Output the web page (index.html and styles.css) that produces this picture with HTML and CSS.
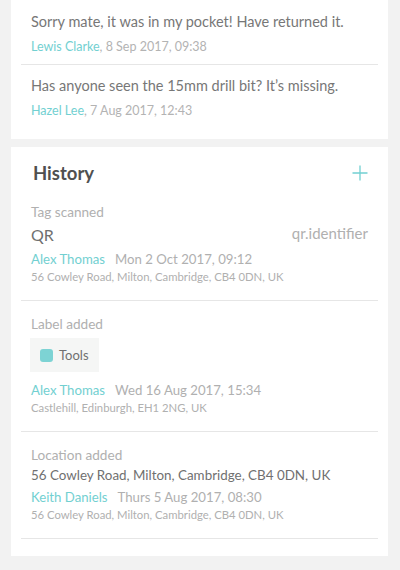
FILE: index.html
```html
<!DOCTYPE html>
<html lang="en">
<head>
    <meta charset="UTF-8">
    <meta name="viewport" content="width=device-width, initial-scale=1.0">
    <title>Item history</title>
    <link rel="stylesheet" href="styles.css">
</head>
<body>
    <section class="card comments">
        <ul class="list">
            <li class="comment">
                <p class="comment-text">Sorry mate, it was in my pocket! Have returned it.</p>
                <p class="comment-meta"><span class="user">Lewis Clarke</span>, 8 Sep 2017, 09:38</p>
            </li>
            <li class="comment">
                <p class="comment-text">Has anyone seen the 15mm drill bit? It’s missing.</p>
                <p class="comment-meta"><span class="user">Hazel Lee</span>, 7 Aug 2017, 12:43</p>
            </li>
        </ul>
    </section>

    <section class="card history">
        <header class="card-header">
            <h2 class="card-title">History</h2>
            <button class="add-btn" type="button" aria-label="Add">
                <svg width="16" height="16" viewBox="0 0 16 16">
                    <path d="M8 0.5V15.5M0.5 8H15.5" stroke="#72d0d2" stroke-width="1.3" fill="none"/>
                </svg>
            </button>
        </header>
        <ul class="list">
            <li class="event">
                <p class="event-type">Tag scanned</p>
                <div class="event-row">
                    <span class="event-value">QR</span>
                    <span class="event-id">qr.identifier</span>
                </div>
                <p class="event-meta"><span class="user">Alex Thomas</span><span class="date">Mon 2 Oct 2017, 09:12</span></p>
                <p class="event-place">56 Cowley Road, Milton, Cambridge, CB4 0DN, UK</p>
            </li>
            <li class="event">
                <p class="event-type">Label added</p>
                <span class="chip"><span class="chip-dot"></span>Tools</span>
                <p class="event-meta"><span class="user">Alex Thomas</span><span class="date">Wed 16 Aug 2017, 15:34</span></p>
                <p class="event-place">Castlehill, Edinburgh, EH1 2NG, UK</p>
            </li>
            <li class="event">
                <p class="event-type">Location added</p>
                <p class="event-address">56 Cowley Road, Milton, Cambridge, CB4 0DN, UK</p>
                <p class="event-meta"><span class="user">Keith Daniels</span><span class="date">Thurs 5 Aug 2017, 08:30</span></p>
                <p class="event-place">56 Cowley Road, Milton, Cambridge, CB4 0DN, UK</p>
            </li>
        </ul>
    </section>
</body>
</html>
```

FILE: styles.css
```css
body {
    margin: 0;
    background-color: #f2f2f2;
    font-family: 'Lato', 'Noto Sans', sans-serif;
    color: #777777;
    height: 570px;
    overflow: hidden;
}

p {
    margin: 0;
}

.card {
    background-color: #ffffff;
    margin: 0 12px 0 11px;
}

.list {
    list-style: none;
    margin: 0 10px;
    padding: 0;
}

.user {
    color: #72d0d1;
}

/* comments */

.comments {
    padding: 1px 0 11px;
}

.comment {
    padding: 11px 10px 8px;
    border-bottom: 1px solid #e6e6e6;
}

.comment:last-child {
    border-bottom: none;
}

.comment-text {
    font-size: 14.5px;
    line-height: 20px;
}

.comment-meta {
    margin-top: 6px;
    font-size: 12.5px;
    line-height: 18px;
    color: #b3b3b3;
}

/* history */

.history {
    margin-top: 8px;
    padding: 13px 0 17px;
}

.card-header {
    display: flex;
    justify-content: space-between;
    align-items: center;
    padding: 1px 20px 0 22px;
    margin-bottom: 4px;
}

.card-title {
    margin: 0;
    font-size: 18.5px;
    line-height: 24px;
    font-weight: 700;
    color: #505050;
}

.add-btn {
    border: none;
    background: none;
    padding: 0;
    width: 16px;
    height: 16px;
    cursor: pointer;
}

.add-btn svg {
    display: block;
}

.event {
    padding: 14px 10px 15px;
    border-bottom: 1px solid #e6e6e6;
}

.event-type {
    font-size: 13.6px;
    line-height: 18px;
    color: #b0b0b0;
}

.event-row {
    display: flex;
    justify-content: space-between;
    align-items: flex-start;
    margin-top: 3px;
}

.event-value {
    font-size: 16px;
    line-height: 22px;
    color: #707070;
}

.event-id {
    font-size: 15px;
    line-height: 18px;
    color: #b0b0b0;
}

.event-address {
    margin-top: 2px;
    font-size: 13.4px;
    line-height: 18px;
    color: #707070;
}

.event-meta {
    margin-top: 4px;
    font-size: 13.2px;
    line-height: 18px;
    color: #b0b0b0;
}

.event-meta .date {
    margin-left: 10px;
}

.event-place {
    margin-top: 1px;
    font-size: 11.3px;
    line-height: 16px;
    color: #b0b0b0;
}

.chip {
    display: flex;
    width: fit-content;
    align-items: center;
    gap: 6px;
    margin: 5px 0 9px -1px;
    padding: 0 10px;
    height: 34px;
    background-color: #f5f6f5;
    font-size: 13px;
    color: #707070;
}

.chip-dot {
    width: 13px;
    height: 13px;
    border-radius: 3px;
    background-color: #7dd3d4;
}
```
